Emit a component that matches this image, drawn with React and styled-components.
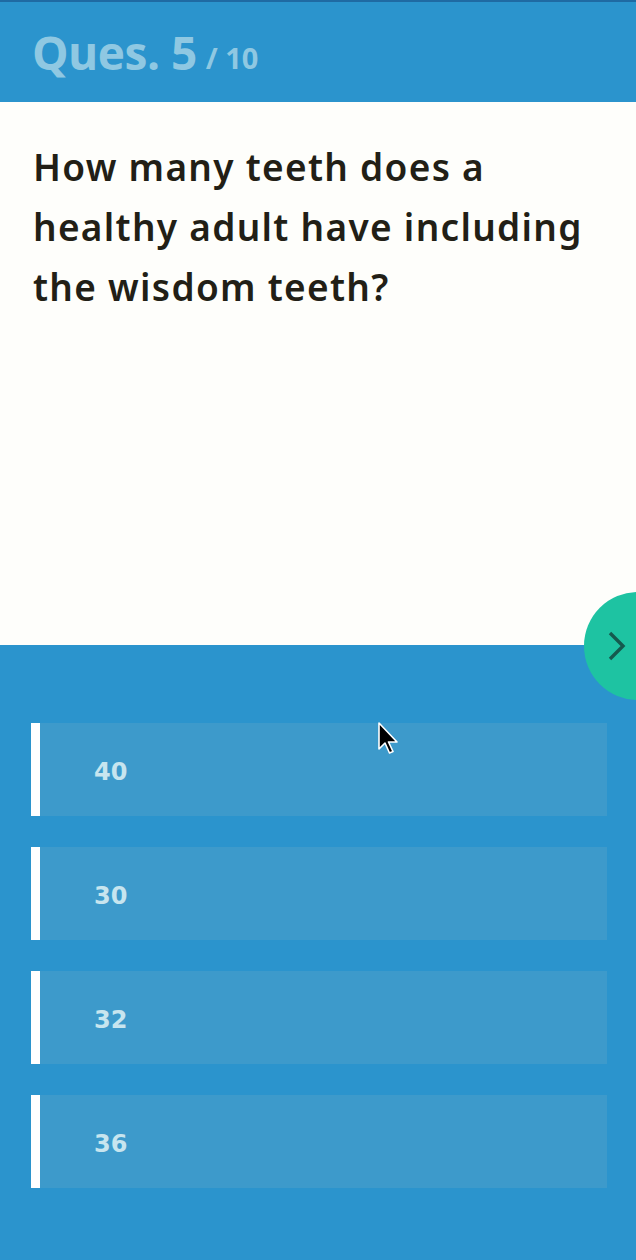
import React from 'react'
import styled, { createGlobalStyle } from 'styled-components'

const GlobalStyle = createGlobalStyle`
  html, body {
    margin: 0;
    padding: 0;
    background: #2b94cd;
  }
  * { box-sizing: border-box; }
`;

const Page = styled.div`
  width: 636px;
  min-height: 1260px;
  display: flex;
  flex-direction: column;
  position: relative;
  background: #2b94cd;
  overflow: hidden;
`;

const Header = styled.header`
  height: 102px;
  border-top: 2px solid #1f6aa3;
  background: #2b94cd;
  padding: 0 32px;
  display: flex;
  align-items: center;
  font-family: "Open Sans", "Liberation Sans", sans-serif;
  font-weight: 700;
  color: #8fc8e2;
`;

const QuesNum = styled.span`
  font-size: 46px;
  letter-spacing: -0.5px;
`;

const Total = styled.span`
  font-size: 29px;
  margin-left: 9px;
  margin-top: 10px;
`;

const QuestionPanel = styled.section`
  position: relative;
  height: 543px;
  background: #fefefb;
  padding: 35px 30px 0 33px;
`;

const QuestionText = styled.h1`
  margin: 0;
  font-family: "Noto Sans", "DejaVu Sans", sans-serif;
  font-weight: 600;
  font-size: 37px;
  line-height: 60px;
  letter-spacing: 1.3px;
  color: #221f16;
`;

const NextButton = styled.button`
  position: absolute;
  right: -56px;
  bottom: -55px;
  width: 108px;
  height: 108px;
  border-radius: 50%;
  border: none;
  background: #1ec3a2;
  z-index: 2;
  padding: 0 0 0 22px;
  display: flex;
  align-items: center;
  justify-content: flex-start;
  cursor: pointer;
`;

const Answers = styled.div`
  flex: 1;
  padding: 78px 29px 60px 31px;
  display: flex;
  flex-direction: column;
  gap: 31px;
`;

const Option = styled.div`
  height: 93px;
  background: #3d9acb;
  border-left: 9px solid #ffffff;
  display: flex;
  align-items: center;
  padding: 4px 0 0 54px;
  font-family: "DejaVu Sans", Verdana, sans-serif;
  font-weight: 700;
  font-size: 24px;
  color: #c7e5ef;
`;

const Cursor = styled.svg`
  position: absolute;
  left: 378px;
  top: 722px;
  z-index: 3;
`;

const options = ['40', '30', '32', '36']

export default function App() {
  return (
    <Page>
      <GlobalStyle />
      <Header>
        <QuesNum>Ques. 5</QuesNum>
        <Total>/ 10</Total>
      </Header>
      <QuestionPanel>
        <QuestionText>
          How many teeth does a healthy adult have including the wisdom teeth?
        </QuestionText>
        <NextButton aria-label="Next">
          <svg width="20" height="32" viewBox="0 0 20 32">
            <path d="M4 3 L17 16 L4 29" fill="none" stroke="#15594e" strokeWidth="3.4" />
          </svg>
        </NextButton>
      </QuestionPanel>
      <Answers>
        {options.map((o) => (
          <Option key={o}>{o}</Option>
        ))}
      </Answers>
      <Cursor width="22" height="36" viewBox="0 0 22 36">
        <path
          d="M1 1 L1 27 L7 21 L11.5 31 L15 29.5 L10.5 20 L19 20 Z"
          fill="#000"
          stroke="#fff"
          strokeWidth="1.6"
          strokeLinejoin="round"
        />
      </Cursor>
    </Page>
  );
}
